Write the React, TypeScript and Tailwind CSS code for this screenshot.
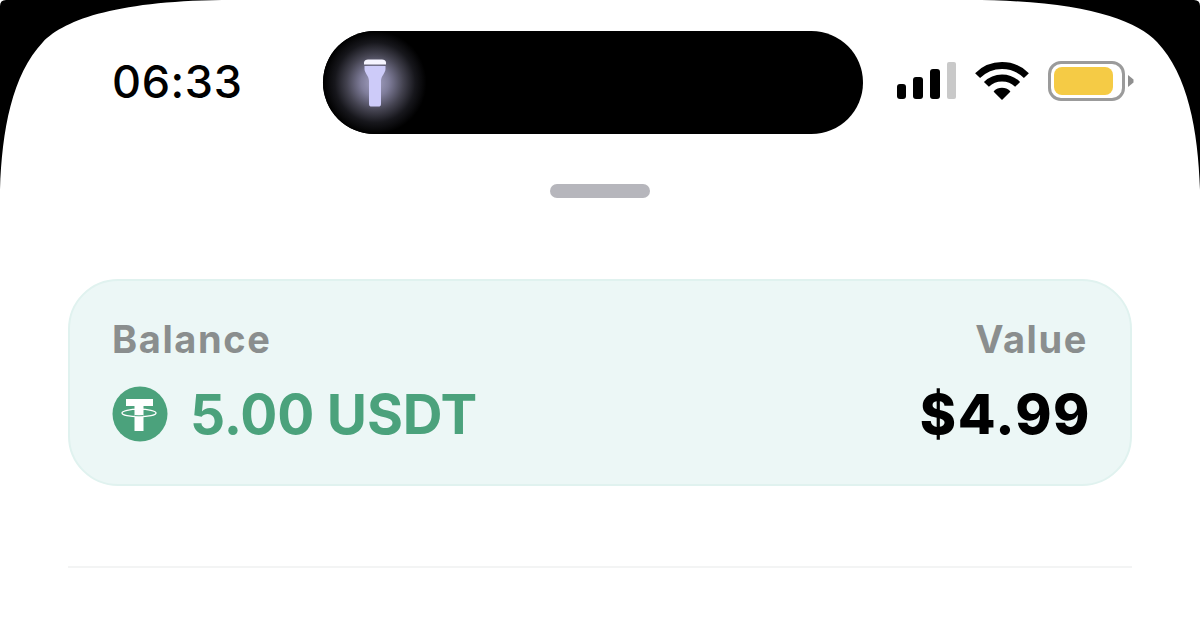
import React from 'react';

const font = { fontFamily: 'Inter, "Liberation Sans", sans-serif' };

const Corner = ({ className }: { className: string }) => (
  <svg width="232" height="192" viewBox="0 0 232 192" className={className}>
    <path d="M0 190C2 130 12 75 43 42C65 19 120 0 232 0H6Q0 0 0 6Z" fill="black" />
  </svg>
);

const Flashlight = () => (
  <svg width="24" height="50" viewBox="0 0 24 50" fill="none">
    <path d="M1 4.500C1 2.500 3 1.500 5 1.500H19C21 1.500 23 2.500 23 4.500V6.500H1Z" fill="#f5f4ff" />
    <path d="M1.500 8H22.500V11C22.500 15 18 18 18 23V46C18 48 17 48.500 15.500 48.500H8.500C7 48.500 6 48 6 46V23C6 18 1.500 15 1.500 11Z" fill="#cdcbf9" />
  </svg>
);

const Signal = () => (
  <div className="flex items-end gap-[7px] h-[38px]">
    <div className="w-[9px] h-[15px] rounded-[3px] bg-black" />
    <div className="w-[10px] h-[22px] rounded-[3px] bg-black" />
    <div className="w-[10px] h-[30px] rounded-[3px] bg-black" />
    <div className="w-[9px] h-[37px] rounded-[2px] bg-[#c9c9c9]" />
  </div>
);

const Wifi = () => (
  <svg width="54" height="40" viewBox="0 0 54 40" fill="none">
    <path d="M2.600 14.600A34.500 34.500 0 0 1 51.400 14.600" stroke="black" strokeWidth="7" />
    <path d="M11.400 23.400A22 22 0 0 1 42.600 23.400" stroke="black" strokeWidth="7" />
    <path d="M27 38L19.500 30.500A10.600 10.600 0 0 1 34.500 30.500Z" fill="black" stroke="black" strokeWidth="1.500" strokeLinejoin="round" />
  </svg>
);

const Battery = () => (
  <div className="flex items-center gap-[3px]">
    <div className="w-[77px] h-[40px] rounded-[13px] border-[3px] border-[#9b9b9b] p-[3px] pr-[9px]">
      <div className="w-full h-full rounded-[8px] bg-[#f5cb45]" />
    </div>
    <svg width="6" height="12" viewBox="0 0 6 12">
      <path d="M0 0L5.500 4.500V7.500L0 12Z" fill="#8f8f8f" />
    </svg>
  </div>
);

const Tether = () => (
  <svg width="56" height="56" viewBox="0 0 56 56" className="shrink-0">
    <circle cx="28" cy="28" r="27.500" fill="#4ba27c" />
    <path d="M14 13H41V20H31.500V45H22.500V20H14Z" fill="white" />
    <ellipse cx="27" cy="27" rx="17" ry="3.800" fill="none" stroke="white" strokeWidth="1.300" />
    <path d="M22.500 29.600Q27 30 31.500 29.600" fill="none" stroke="#4ba27c" strokeWidth="1" />
  </svg>
);

export default function App() {
  return (
    <div className="relative w-[1200px] h-[623px] overflow-hidden bg-white px-[68px] pt-[31px]" style={font}>
      <Corner className="absolute left-0 top-0" />
      <Corner className="absolute right-0 top-0 -scale-x-100" />

      {/* Status bar */}
      <div className="flex items-start h-[103px]">
        <div className="w-[255px] shrink-0 pl-[44px] pt-[24px] text-[45px] leading-[54px] font-[550] text-black tracking-[0.6px]">06:33</div>
        <div className="w-[540px] h-[103px] shrink-0 rounded-[52px] bg-black overflow-hidden flex">
          <div className="w-[104px] h-full flex items-center justify-center bg-[radial-gradient(circle_closest-side,#a5a3c5_0%,#7f7d9a_27%,#43424f_55%,#17171c_78%,#000000_100%)]">
            <Flashlight />
          </div>
        </div>
        <div className="flex items-start pt-[30px] pl-[34px]">
          <Signal />
          <div className="ml-[19px]"><Wifi /></div>
          <div className="ml-[19px]"><Battery /></div>
        </div>
      </div>

      {/* Sheet handle */}
      <div className="mt-[50px] mx-auto w-[100px] h-[14px] rounded-full bg-[#b6b6bc]" />

      {/* Balance card */}
      <div className="mt-[81px] h-[207px] rounded-[50px] border-2 border-[#e0f2ef] bg-[#ecf7f6] pl-[42px] pr-[42px] pt-[34px]">
        <div className="flex justify-between text-[38px] leading-[48px] font-bold text-[#8a8e8e] tracking-[1.6px]">
          <span>Balance</span>
          <span>Value</span>
        </div>
        <div className="mt-[20px] flex items-center justify-between">
          <div className="flex items-center gap-[22px]">
            <Tether />
            <span className="text-[55px] leading-[62px] font-bold text-[#4ba27c] tracking-[-0.2px]">5.00 USDT</span>
          </div>
          <span className="text-[55px] leading-[62px] font-extrabold text-black tracking-[1.5px] -mr-[3px]">$4.99</span>
        </div>
      </div>

      {/* Divider */}
      <div className="mt-[80px] h-[2px] bg-[#f3f4f4]" />
    </div>
  );
}
